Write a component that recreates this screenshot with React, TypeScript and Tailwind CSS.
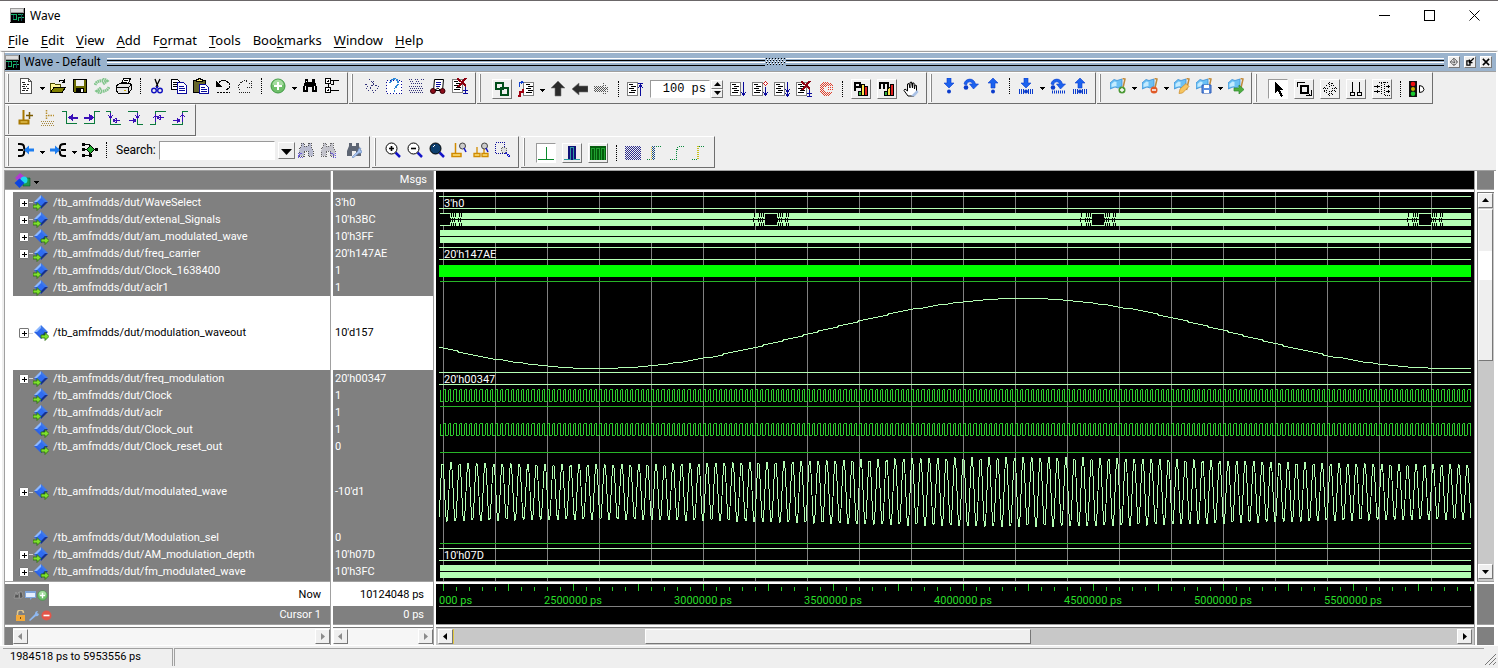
import type { ReactNode } from 'react'
import { clsx } from 'clsx'

type Kind = 'bus' | 'dense' | 'burst' | 'solid' | 'high' | 'low' | 'clock' | 'sine' | 'am'

type Signal = {
  name: string
  value: string
  kind: Kind
  dir: 'in' | 'out'
  expand?: boolean
  tall?: boolean
  selected?: boolean
}

const signals: Signal[] = [
  { name: 'WaveSelect', value: "3'h0", kind: 'bus', dir: 'in', expand: true },
  { name: 'extenal_Signals', value: "10'h3BC", kind: 'burst', dir: 'in', expand: true },
  { name: 'am_modulated_wave', value: "10'h3FF", kind: 'dense', dir: 'out', expand: true },
  { name: 'freq_carrier', value: "20'h147AE", kind: 'bus', dir: 'in', expand: true },
  { name: 'Clock_1638400', value: '1', kind: 'solid', dir: 'in' },
  { name: 'aclr1', value: '1', kind: 'high', dir: 'in' },
  { name: 'modulation_waveout', value: "10'd157", kind: 'sine', dir: 'out', expand: true, tall: true, selected: true },
  { name: 'freq_modulation', value: "20'h00347", kind: 'bus', dir: 'in', expand: true },
  { name: 'Clock', value: '1', kind: 'clock', dir: 'in' },
  { name: 'aclr', value: '1', kind: 'high', dir: 'in' },
  { name: 'Clock_out', value: '1', kind: 'clock', dir: 'out' },
  { name: 'Clock_reset_out', value: '0', kind: 'low', dir: 'out' },
  { name: 'modulated_wave', value: "-10'd1", kind: 'am', dir: 'out', expand: true, tall: true },
  { name: 'Modulation_sel', value: '0', kind: 'low', dir: 'in' },
  { name: 'AM_modulation_depth', value: "10'h07D", kind: 'bus', dir: 'in', expand: true },
  { name: 'fm_modulated_wave', value: "10'h3FC", kind: 'dense', dir: 'out', expand: true },
]

const menus: [string, string, string][] = [
  ['', 'F', 'ile'],
  ['', 'E', 'dit'],
  ['', 'V', 'iew'],
  ['', 'A', 'dd'],
  ['F', 'o', 'rmat'],
  ['', 'T', 'ools'],
  ['Boo', 'k', 'marks'],
  ['', 'W', 'indow'],
  ['', 'H', 'elp'],
]

/* ---------- icons ---------- */

const NAVY = '#0a0a9c'

function Lines({ x = 3, y = 3, c = '#000' }: { x?: number; y?: number; c?: string }) {
  return (
    <path
      d={`M${x} ${y + 0.5}h4M${x + 2} ${y + 2.5}h5M${x} ${y + 4.5}h5M${x + 2} ${y + 6.5}h5M${x} ${y + 8.5}h6`}
      stroke={c}
      fill="none"
    />
  )
}

function Sheet() {
  return (
    <>
      <path d="M.5 1.500h10v13h-10z" fill="#fff" stroke="#808080" />
      <Lines x={2} y={3} />
    </>
  )
}

function Flag() {
  return (
    <>
      <path d="M0 5l4-3.500 3 1L12 1v7l-4 2-3-1-5 2z" fill="#6bc0f4" stroke="#3a8fd6" strokeWidth=".8" />
      <path d="M1.500 6l3-2.500 2 .5v4l-5 1z" fill="#c4ebff" />
      <path d="M12.500 .5l2.500 .5-2.500 11" fill="none" stroke="#c08a3a" strokeWidth="1.500" />
    </>
  )
}

function Magnifier({ fill }: { fill: string }) {
  return (
    <>
      <path d="M10.500 10.500l4.500 4.500" stroke="#1414c8" strokeWidth="2.500" />
      <circle cx="6.500" cy="6.500" r="5.500" fill={fill} stroke="#000" />
    </>
  )
}

function StepDown() {
  return <path d="M6 0h4v5h3l-5 5-5-5h3z" fill="#1c62ee" stroke="#0b3ccc" strokeWidth=".6" />
}

function StepUp() {
  return <path d="M6 10h4v-5h3l-5-5-5 5h3z" fill="#1c62ee" stroke="#0b3ccc" strokeWidth=".6" />
}

function StepOver() {
  return (
    <>
      <path d="M1 6c1-6 10-7 11.500 0h3l-5 5-4-5h3c-1-3-5-3-6 1z" fill="#1c62ee" stroke="#0b3ccc" strokeWidth=".6" />
      <circle cx="3" cy="9.500" r="2.300" fill="#0b3ccc" />
    </>
  )
}

const Bars = () => <path d="M1.500 11v5M3.500 11v5M5.500 11v5M10.500 11v5M12.500 11v5M14.500 11v5" stroke="#0b3ccc" />

const BINO = 'M3 1h3v3h4V1h3v3l2 5v5h-5V9H6v5H1V9l2-5z'

const icons: Record<string, ReactNode> = {
  doc: (
    <>
      <path d="M2.500 .5h8l3 3v12h-11z" fill="#fff" stroke="#555" />
      <path d="M10.500 .5v3h3" fill="none" stroke="#555" />
      <path d="M4 4.500h4M5 6.500h6M4 8.500h5M5 10.500h6M4 12.500h6" stroke="#222" strokeDasharray="3 1" />
    </>
  ),
  open: (
    <>
      <path d="M.5 14V5.500h4l1 1h5V9" fill="#fff79a" stroke="#4a4a00" />
      <path d="M.5 14.500L4 9.500h11.500l-3.500 5z" fill="#808000" stroke="#000" />
      <path d="M9 3.500q2-3 5 0M14.500 1v3h-3" fill="none" stroke="#000" />
    </>
  ),
  save: (
    <>
      <path d="M1.500 1.500h13v13H2.500l-1-1z" fill="#6b6b00" stroke="#000" />
      <path d="M4 2h8v6H4z" fill="#efefef" />
      <path d="M4 10h8v5H4z" fill="#000" />
      <path d="M9 11h2v3H9z" fill="#fff" />
    </>
  ),
  reload: (
    <g fill="none" stroke="#7fc48a" strokeWidth="3" strokeDasharray="1.500 .6">
      <path d="M1 7q2-5 9-4M9 0l4 3-4 3" />
      <path d="M15 9q-2 5-9 4M7 16l-4-3 4-3" />
    </g>
  ),
  print: (
    <>
      <path d="M5.500 6l2-5.500h7L12 6" fill="#fff" stroke="#000" />
      <path d="M.5 8l3-2.500h11l1 2v4l-3 3.500H2L.5 13z" fill="#e6e6e6" stroke="#000" />
      <path d="M1 9.500h11l3-2M12 10v5M8 2.500h4M7 4.500h4" fill="none" stroke="#000" />
      <path d="M8 12h2v1H8z" fill="#c9a800" />
    </>
  ),
  cut: (
    <>
      <path d="M6 1l3 8M11 1L7 9" stroke="#000" strokeWidth="1.300" />
      <circle cx="5" cy="12.500" r="2.300" fill="none" stroke="#1010c0" strokeWidth="1.400" />
      <circle cx="11" cy="12.500" r="2.300" fill="none" stroke="#1010c0" strokeWidth="1.400" />
      <path d="M8.500 8l-2 3M7.500 8l2 3" stroke="#1010c0" />
    </>
  ),
  copy: (
    <>
      <path d="M.5 1.500h6l2 2v8h-8z" fill="#fff" stroke="#000" />
      <path d="M2 4.500h4M2 6.500h5M2 8.500h5" stroke="#000" />
      <path d="M6.500 4.500h6l3 3v8h-9z" fill="#fff" stroke={NAVY} />
      <path d="M8 8.500h5M8 10.500h6M8 12.500h6" stroke={NAVY} />
    </>
  ),
  paste: (
    <>
      <path d="M.5 2.500h12v12H.5z" fill="#66662a" stroke="#000" />
      <path d="M3.500 3.500h6v-2h-2v-1h-2v1h-2z" fill="#ffe97a" stroke="#000" />
      <path d="M6.500 6.500h6l3 3v6h-9z" fill="#fff" stroke={NAVY} />
      <path d="M8 9.500h4M8 11.500h6M8 13.500h6" stroke={NAVY} />
    </>
  ),
  undo: (
    <>
      <path d="M3 6q4-6 9-2.500t2 6.500l-3 2" fill="none" stroke="#000" />
      <path d="M1 3v6h6z" fill="#000" />
      <path d="M2 14.500h13" stroke="#000" strokeDasharray="2 1" />
    </>
  ),
  redo: (
    <g fill="none" stroke="#222" strokeDasharray="1 1">
      <path d="M13 6Q8 0 4 4.500t-1 7" />
      <path d="M14.500 3v6h-6M2 14.500h12" />
    </g>
  ),
  add: (
    <>
      <circle cx="8" cy="8" r="7" fill="#6fbf6a" stroke="#3f9a43" />
      <path d="M2.500 7a5.500 5.500 0 0 1 11 0z" fill="#a5dca0" />
      <path d="M8 4v8M4 8h8" stroke="#fff" strokeWidth="2" />
    </>
  ),
  find: (
    <>
      <path d={BINO} fill="#000" />
      <path d="M3.500 8v4M12.500 8v4M4.500 3v1" stroke="#fff" />
    </>
  ),
  tree: (
    <g fill="#fff" stroke="#000">
      <path d="M1.500 .5h5v5h-5zM1.500 9.500h5v5h-5zM3 3h2M4 2v2M3 12h2M4 11v2" />
      <path d="M4 6v3M7 2.500h8M7 6.500h2v-4M7 12.500h8" fill="none" />
    </g>
  ),
  compile: (
    <path
      d="M1 6l3 2-2 2 4 4M5 1l5 5-4 3 4 6M9 4l2-2M11 7l4 2-4 4"
      fill="none"
      stroke="#33337a"
      strokeDasharray="2 1"
    />
  ),
  compileAll: (
    <>
      <path d="M.5 2.500h15v13H.5z" fill="#fff" stroke={NAVY} strokeDasharray="1 2" />
      <path d="M4 5q1-4 4.500-4T12 5t-4 5M7.500 13h1" fill="none" stroke="#2d86d8" strokeWidth="1.800" strokeDasharray="2 .7" />
    </>
  ),
  simulate: (
    <path
      d="M1 1.500h3M7 1.500h3M13 1.500h3M2 3.500h4M8 3.500h4M3 5.500h12M1 8.500h14M2 10.500h14M1 12.500h14M2 14.500h14"
      stroke="#33337a"
      strokeDasharray="1 1"
    />
  ),
  restartDoc: (
    <>
      <path d="M4.500 1.500h9l-1 11h-9z" fill="#fff" stroke="#000" />
      <path d="M6 4.500h5M6 6.500h5M6 8.500h4" stroke={NAVY} />
      <circle cx="3" cy="13" r="2.500" fill="#8d0d1a" stroke="#3a0008" />
      <circle cx="12.500" cy="13" r="2.500" fill="#8d0d1a" stroke="#3a0008" />
      <path d="M5 12l3-2 2 2" fill="none" stroke="#000" />
    </>
  ),
  breakDoc: (
    <>
      <Sheet />
      <path d="M5 0l9 8M14 0L6 9" stroke="#8d0010" strokeWidth="2" />
      <path d="M13.500 9v6M11 12.500h5M11 15.500h5" stroke={NAVY} />
    </>
  ),
  link: (
    <g fill="none" stroke="#004d1a" strokeWidth="2">
      <path d="M2 2h7v6H2z" />
      <path d="M7 7h7v7H7z" />
    </g>
  ),
  restart: (
    <>
      <path d="M5.500 1.500h10v13h-10z" fill="#fff" stroke="#808080" />
      <Lines x={8} y={3} />
      <path d="M1.500 6V1.500h3M3 0l2 1.500-2 1.500" fill="none" stroke="#1040d0" />
      <path d="M0 15h2v-4h3v-3" fill="none" stroke="#a00010" strokeWidth="2" />
    </>
  ),
  up: <path d="M8 0l7 7h-4v8H5V7H1z" fill="#2c2c2c" stroke="#777" strokeWidth=".6" />,
  left: <path d="M0 8l7-6v3h9v6H7v3z" fill="#2c2c2c" stroke="#777" strokeWidth=".6" />,
  right: (
    <g stroke="#555" strokeDasharray="1 1">
      <path d="M0 5.500h9M1 6.500h10M0 7.500h14M1 8.500h14M0 9.500h12M1 10.500h9M9.500 2v12M11.500 4v9M13.500 6v5" />
    </g>
  ),
  runTop: (
    <>
      <Sheet />
      <path d="M13.500 2v13M11 2.500h5M11 7l2.500-3L16 7" fill="none" stroke={NAVY} />
    </>
  ),
  run: (
    <>
      <Sheet />
      <path d="M13.500 1v13M11 11l2.500 3 2.500-3" fill="none" stroke={NAVY} />
    </>
  ),
  runNext: (
    <>
      <Sheet />
      <path d="M13.500 6v8M11 11l2.500 3 2.500-3" fill="none" stroke={NAVY} />
      <path d="M13.500 .5l2 2-2 2-2-2z" fill="#fff" stroke="#d02020" />
    </>
  ),
  runAll: (
    <>
      <Sheet />
      <path d="M13.500 1v13M11 8l2.500 3 2.500-3M11 12l2.500 3 2.500-3" fill="none" stroke={NAVY} />
    </>
  ),
  stop: (
    <g fill="none" stroke="#e0402c" strokeDasharray="1 1">
      <path d="M5 1.500h6M4 2.500h9M3 3.500h11M2 4.500h13M3 5.500h5M2 6.500h4M10 6.500h5M3 7.500h3M2 8.500h4M10 8.500h5M3 9.500h3M2 10.500h5M3 11.500h12M4 12.500h10M5 13.500h8M6 14.500h5" />
    </g>
  ),
  profile: (
    <>
      <path d="M5.500 10.500h3v4h-3z" fill="#2fae3c" stroke="#000" />
      <path d="M8.500 3.500h3v11h-3z" fill="#ffe14a" stroke="#000" />
      <path d="M11.500 5.500h3v9h-3z" fill="#e02020" stroke="#000" />
      <path d="M2 10V2h5v4H2" fill="none" stroke="#000" strokeWidth="2" />
    </>
  ),
  memory: (
    <>
      <path d="M5.500 10.500h3v4h-3z" fill="#2fae3c" stroke="#000" />
      <path d="M8.500 6.500h3v8h-3z" fill="#ffe14a" stroke="#000" />
      <path d="M11.500 3.500h3v11h-3z" fill="#e02020" stroke="#000" />
      <path d="M1 8V2h8v6M5 2v6" fill="none" stroke="#000" strokeWidth="2" />
    </>
  ),
  hand: (
    <>
      <path
        d="M5 15L1 9.500l1-1.500 2.500 2V3l1.500-.5L7 7V1.500L8.500 1 9.500 7V2L11 2l.5 6L12 4l1.500.5V11L11 15z"
        fill="#fff"
        stroke="#000"
      />
      <path d="M8 15l6-6 1.500 2-4 4.500z" fill="#a9c1e6" />
    </>
  ),
  stepIn: (
    <>
      <StepDown />
      <circle cx="8" cy="13.500" r="2" fill="#0b3ccc" />
    </>
  ),
  stepOver: <StepOver />,
  stepOut: (
    <>
      <StepUp />
      <circle cx="8" cy="13.500" r="2" fill="#0b3ccc" />
    </>
  ),
  stepInAll: (
    <>
      <StepDown />
      <Bars />
      <circle cx="8" cy="13.500" r="2" fill="#0b3ccc" />
    </>
  ),
  stepOverAll: (
    <>
      <StepOver />
      <path d="M2 14h14" stroke="#0b3ccc" strokeWidth="3" strokeDasharray="1 1" />
    </>
  ),
  stepOutAll: (
    <>
      <StepUp />
      <Bars />
      <circle cx="8" cy="13.500" r="2" fill="#0b3ccc" />
    </>
  ),
  flagAdd: (
    <>
      <Flag />
      <circle cx="12" cy="12" r="3.500" fill="#4c9a36" />
      <path d="M12 10v4M10 12h4" stroke="#fff" strokeWidth="1.300" />
    </>
  ),
  flagDel: (
    <>
      <Flag />
      <circle cx="12" cy="12" r="3.500" fill="#e05a28" />
      <path d="M10 12h4" stroke="#fff" strokeWidth="1.500" />
    </>
  ),
  flagEdit: (
    <>
      <Flag />
      <path d="M5 15.500l1-4.500 6-5.500 3 3L8.500 15z" fill="#f6c560" stroke="#c98a28" strokeWidth=".7" />
    </>
  ),
  flagSave: (
    <>
      <Flag />
      <path d="M6 7h9v8H6z" fill="#5d8fe0" stroke="#2f5fb8" />
      <path d="M8 7h5v3H8zM8 12h5v3H8z" fill="#fff" />
    </>
  ),
  flagGo: (
    <>
      <Flag />
      <path d="M6 10h5V7l5 4.500L11 16v-3H6z" fill="#4fae3f" stroke="#2f8a2f" strokeWidth=".7" />
    </>
  ),
  pointer: <path d="M5 1v11l3-2 3 6 2-1-3-6h3z" fill="#000" />,
  zoomMode: (
    <>
      <path d="M1.500 6V1.500H9" fill="none" stroke="#000" />
      <path d="M5 5h7v7H5z" fill="none" stroke="#000" strokeWidth="2" />
      <path d="M10 14.500h5.500V9M11 11l4 4" fill="none" stroke="#000" />
    </>
  ),
  panMode: (
    <g fill="none" stroke="#000" strokeDasharray="1 1">
      <path d="M7.500 1v5M9.500 2v4M7.500 10v5M9.500 10v4M1 7.500h5M2 9.500h4M10 7.500h5M10 9.500h4" />
      <path d="M4.500 4.500l4-4 4 4M4.500 11.500l4 4 4-4M4.500 4.500l-4 4 4 4M11.500 4.500l4 4-4 4" />
    </g>
  ),
  twoCursor: <path d="M4.500 1v10.500M11.500 1v10.500M2.500 11.500h4v3h-4zM9.500 11.500h4v3h-4z" fill="none" stroke="#000" />,
  editMode: (
    <>
      <path d="M5 1.500h5M10.500 14.500H16M7.500 2v12M10.500 1v13M11 1.500h4" stroke="#000" fill="none" strokeDasharray="1 1" />
      <path d="M0 5.500h6M0 10.500h6M3.500 4v3M3.500 9v3M12 5.500h4M12 10.500h4M14.500 4v3M14.500 9v3" stroke="#000" />
    </>
  ),
  traffic: (
    <>
      <path d="M0 0h8v16H0z" fill="#111" />
      <circle cx="4" cy="3" r="2.300" fill="#f01010" />
      <circle cx="4" cy="8" r="2" fill="#c8b400" />
      <circle cx="4" cy="12.800" r="2.300" fill="#18c830" />
      <path d="M10.500 4.500q4 0 4.500 4-.5 3-4.500 3z" fill="#fff" stroke="#000" />
    </>
  ),
  cursorAdd: (
    <>
      <path d="M5.500 0v10M1.500 10.500h9v3h-9z" fill="#ffe27a" stroke="#a87800" strokeWidth="2" />
      <path d="M8 5.500h7M11.500 2v7" stroke="#7a5a00" strokeWidth="1.500" />
    </>
  ),
  cursorDel: (
    <>
      <path d="M6.500 0v10M8 5.500h6" stroke="#b89030" strokeWidth="1.500" strokeDasharray="1.500 1" />
      <path d="M1 11.500h13M2 13.500h12M1 15.500h13" stroke="#a88a40" strokeDasharray="1 1" />
    </>
  ),
  prevEdge: (
    <>
      <path d="M0 1.500h4.500v12H15" fill="none" stroke="#0a7a3c" />
      <path d="M6 7.500l5-4v3h5v2h-5v3z" fill="#3a10b8" />
    </>
  ),
  nextEdge: (
    <>
      <path d="M0 13.500h10.500v-12H16" fill="none" stroke="#0a7a3c" />
      <path d="M10 7.500l-5-4v3H0v2h5v3z" fill="#3a10b8" />
    </>
  ),
  prevFall: (
    <>
      <path d="M0 1.500h4.500v13H15" fill="none" stroke="#0a7a3c" />
      <path d="M4.500 3v5M2.500 5.500l2 3 2-3M7 10.500h7M10 8v5M7 10.500l3-2.500M7 10.500l3 2.500" fill="none" stroke="#3a10b8" />
    </>
  ),
  nextFall: (
    <>
      <path d="M0 1.500h9.500v13H15" fill="none" stroke="#0a7a3c" />
      <path d="M9.500 3v5M7.500 5.500l2 3 2-3M1 10.500h7M5 8v5M8 10.500L5 8M8 10.500L5 13" fill="none" stroke="#3a10b8" />
    </>
  ),
  prevRise: (
    <>
      <path d="M0 14.500h5.500v-13H16" fill="none" stroke="#0a7a3c" />
      <path d="M5.500 12V5M3.500 8l2-3 2 3M8 7.500h6M10 5v5M7 7.500L10 5M7 7.500l3 2.500" fill="none" stroke="#3a10b8" />
    </>
  ),
  nextRise: (
    <>
      <path d="M0 14.500h10.500v-13H16" fill="none" stroke="#0a7a3c" />
      <path d="M10.500 12V4M8.500 7l2-3 2 3M1 10.500h7M5 8v5M8 10.500L5 8M8 10.500L5 13" fill="none" stroke="#3a10b8" />
    </>
  ),
  drivers: (
    <>
      <path d="M0 2h2q4 0 4 3t2 3M0 8h5M0 14h2q4 0 4-3t2-3" fill="none" stroke="#000" strokeWidth="2" />
      <path d="M6 8l5-4.500v3h5v3h-5v3z" fill="#1c7df0" />
    </>
  ),
  readers: (
    <>
      <path d="M16 2h-2q-4 0-4 3t-2 3M16 8h-5M16 14h-2q-4 0-4-3t-2-3" fill="none" stroke="#000" strokeWidth="2" />
      <path d="M10 8L5 3.500v3H0v3h5v3z" fill="#1c7df0" />
    </>
  ),
  nets: (
    <>
      <path d="M1 2.500h6v11H1M0 7.500h15" fill="none" stroke="#000" />
      <path d="M0 1h3v3H0zM0 12h3v3H0zM0 6h3v3H0zM7 12h3v3H7zM13 6h3v3h-3z" fill="#000" />
      <path d="M8.500 3.500l4 4-4 4-4-4z" fill="#22b030" stroke="#000" />
    </>
  ),
  findPrev: (
    <>
      <path d={BINO} fill="#b9bcd0" stroke="#555" strokeDasharray="1 1" />
      <path d="M0 15l5-6M.5 11v4.500h4" fill="none" stroke="#6a5ad8" strokeDasharray="1 1" />
    </>
  ),
  findNext: (
    <>
      <path d={BINO} fill="#c4c4cc" stroke="#666" strokeDasharray="1 1" />
      <path d="M10 10l6 5M15.500 11v4.500h-4" fill="none" stroke="#6a5ad8" strokeDasharray="1 1" />
    </>
  ),
  findOpts: (
    <>
      <path d={BINO} fill="#5d6573" />
      <path d="M6 15l6-6q0-3 3-3l-1 2 2 1q0 3-3 2l-6 5z" fill="#a9c4ee" stroke="#6c8cc0" strokeWidth=".6" />
    </>
  ),
  zoomIn: (
    <>
      <Magnifier fill="#fff" />
      <path d="M6.500 4v5M4 6.500h5" stroke="#000" strokeWidth="1.600" />
    </>
  ),
  zoomOut: (
    <>
      <Magnifier fill="#fff" />
      <path d="M4 6.500h5" stroke="#000" strokeWidth="1.600" />
    </>
  ),
  zoomFull: (
    <>
      <Magnifier fill="#0e3f6e" />
      <path d="M4 5l2-2" stroke="#fff" />
    </>
  ),
  zoomCursor: (
    <>
      <path d="M4.500 1v10M1 11.500h9v3H1z" fill="#ffe27a" stroke="#d08a00" strokeWidth="1.500" />
      <circle cx="11.500" cy="4" r="3" fill="#ccc" stroke="#444" />
      <path d="M13 6l2 4" stroke="#1414c8" strokeWidth="1.500" />
    </>
  ),
  zoomTwo: (
    <>
      <path d="M4 5v6M1 11.500h6v3H1zM11 5v6M9 11.500h6v3H9z" fill="#ffe27a" stroke="#d08a00" strokeWidth="1.300" />
      <circle cx="11.500" cy="4" r="3" fill="#ccc" stroke="#444" />
      <path d="M13 6l2 4" stroke="#1414c8" strokeWidth="1.500" />
    </>
  ),
  zoomRegion: (
    <>
      <path d="M.5 .5h9v11h-9z" fill="none" stroke={NAVY} strokeDasharray="1 1" />
      <circle cx="9" cy="8" r="3" fill="#ddd" stroke="#666" strokeDasharray="1 1" />
      <path d="M11 11l4 4" stroke="#1414c8" strokeWidth="2" strokeDasharray="1 1" />
    </>
  ),
  litCursor: <path d="M0 14.500h16M8.500 2v12" stroke="#0a8a2c" fill="none" />,
  litDark: (
    <>
      <path d="M4 1h8v14H4z" fill="#101078" />
      <path d="M0 14.500h6.500v-12h3v12H16" fill="none" stroke="#2a9aa0" />
    </>
  ),
  litGreen: (
    <>
      <path d="M0 1h16v14H0z" fill="#045c0c" />
      <path d="M1.500 15V3.500h3V15M6.500 15V3.500h3V15M11.500 15V3.500h3V15" fill="none" stroke="#1fa030" />
    </>
  ),
  gridBlue: (
    <g stroke="#2a2a8c" strokeDasharray="1 1">
      <path d="M0 1.500h16M1 2.500h15M0 3.500h16M1 4.500h15M0 5.500h16M1 6.500h15M0 7.500h16M1 8.500h15M0 9.500h16M1 10.500h15M0 11.500h16M1 12.500h15M0 13.500h16M1 14.500h15" />
    </g>
  ),
  edgeA: (
    <>
      <path d="M0 14.500h4M9 1.500h6" stroke="#0a8a3c" strokeDasharray="1 1" />
      <path d="M5.500 1v14M6.500 2v14M7.500 1v14" stroke="#1a4a80" strokeDasharray="1 1" />
      <path d="M4.500 2v14" stroke="#c8b840" strokeDasharray="1 1" />
    </>
  ),
  edgeB: <path d="M1 14.500h6.500v-9l2-4H15" fill="none" stroke="#0a8a3c" strokeDasharray="1 1" />,
  edgeC: (
    <>
      <path d="M1 14.500h6M8 1.500h6" stroke="#0a8a3c" strokeDasharray="1 1" />
      <path d="M7 1v14" stroke="#c8c020" strokeWidth="2" strokeDasharray="1 1" />
    </>
  ),
  undock: (
    <path
      d="M8 2v12M2 8h12M5 5l3-3 3 3M5 11l3 3 3-3M5 5L2 8l3 3M11 5l3 3-3 3"
      fill="none"
      stroke="#000"
      strokeWidth="1.200"
      strokeDasharray="2 1"
    />
  ),
  dock: <path d="M3 6h5v7H3zM14 2L8 8M7 4v5h5" fill="none" stroke="#000" strokeWidth="2" />,
  close: <path d="M3 3l10 10M13 3L3 13" stroke="#000" strokeWidth="2.500" />,
}

// drawings with gradients or round shapes that look wrong without antialiasing
const smooth =
  /^(add|reload|up|left|step|flag|hand|cut|traffic|undock|dock|close|zoomIn|zoomOut|zoomFull|zoomCursor|zoomTwo|drivers|readers|restartDoc|findOpts|cursor)/

function Icon({ name, className = 'size-4' }: { name: string; className?: string }) {
  return (
    <svg
      viewBox="0 0 16 16"
      className={clsx('shrink-0', className)}
      shapeRendering={smooth.test(name) ? 'auto' : 'crispEdges'}
      aria-hidden="true"
    >
      {icons[name]}
    </svg>
  )
}

function AppIcon() {
  return (
    <svg viewBox="0 0 15 15" className="size-[15px] shrink-0" shapeRendering="crispEdges" aria-hidden="true">
      <path d="M0 0h15v15H0z" fill="#000" />
      <path d="M0 0h14v14H0z" fill="#9a9a9a" />
      <path d="M1 1h12v3H1z" fill="#dcdcdc" />
      <path d="M1 5h13v9H1z" fill="#000" />
      <path d="M1 6.500h5.500v5H3M8.500 13V9.500h5M8 6.500h5" fill="none" stroke="#17b26a" />
      <path d="M3.500 7v4M11.500 6v7" stroke="#174a58" />
    </svg>
  )
}

function SignalIcon({ dir }: { dir: 'in' | 'out' }) {
  return (
    <svg viewBox="0 0 16 16" className="size-4 shrink-0" aria-hidden="true">
      <path d="M8 0L1 7h7z" fill="#8db8ff" />
      <path d="M8 0l7 7H8z" fill="#3f79ea" />
      <path d="M8 14L1 7h7z" fill="#2b62e6" />
      <path d="M8 14l7-7H8z" fill="#14308f" />
      <path d="M8 3l4 4-4 4-4-4z" fill="#2f6cf0" />
      {dir === 'in' ? (
        <path d="M0 10h4V7.500L8 11.500l-4 4V13H0z" fill="#7ee02c" stroke="#2a6a10" strokeWidth=".8" />
      ) : (
        <path d="M8 10h4V7.500l4 4-4 4V13H8z" fill="#7ee02c" stroke="#2a6a10" strokeWidth=".8" />
      )}
    </svg>
  )
}

/* ---------- toolbar pieces ---------- */

function Bar({ children, boxed, label }: { children: ReactNode; boxed?: boolean; label: string }) {
  return (
    <div
      role="toolbar"
      aria-label={label}
      className="flex h-8 shrink-0 border-r border-b border-t border-t-white border-r-[#6e6e6e] border-b-[#6e6e6e] pr-1"
    >
      <div className="my-px ml-[2px] w-[2px] border-r border-l border-l-white border-r-[#8a8a8a]" />
      <div className={clsx('flex items-center', boxed ? 'pt-px pl-2' : 'pb-1 pl-[6px]')}>{children}</div>
    </div>
  )
}

function Tool({ name }: { name: string }) {
  return (
    <button aria-label={name} className="flex h-[22px] w-[22px] items-center justify-center">
      <Icon name={name} />
    </button>
  )
}

function BoxTool({ name, down }: { name: string; down?: boolean }) {
  return (
    <button
      aria-label={name}
      className={clsx(
        'mx-[3px] flex size-5 items-center justify-center border',
        down ? 'border-[#9a9a9a] border-r-white border-b-white bg-white' : 'border-white border-r-[#777] border-b-[#777]',
      )}
    >
      <Icon name={name} />
    </button>
  )
}

function Drop() {
  return (
    <button aria-label="More" className="flex h-[22px] w-[10px] items-center justify-center">
      <svg viewBox="0 0 5 3" className="mt-1 h-[3px] w-[5px]" shapeRendering="crispEdges">
        <path d="M0 0h5L2.500 3z" />
      </svg>
    </button>
  )
}

function Sep() {
  return (
    <div className="flex w-[11px] justify-center">
      <div className="h-4 border-l border-dotted border-black" />
    </div>
  )
}

function Tools({ names }: { names: string }) {
  return (
    <>
      {names.split(' ').map((n, i) => (n === '|' ? <Sep key={i} /> : n === 'v' ? <Drop key={i} /> : <Tool key={i} name={n} />))}
    </>
  )
}

function ScrollButton({ dir, disabled }: { dir: 'up' | 'down' | 'left' | 'right'; disabled?: boolean }) {
  const d = { up: 'M1 6l3.500-4L8 6z', down: 'M1 3l3.500 4L8 3z', left: 'M6 1v7L2 4.500z', right: 'M3 1v7l4-3.500z' }[dir]
  return (
    <button
      aria-label={'Scroll ' + dir}
      className="flex size-[15px] shrink-0 items-center justify-center border border-white border-r-[#777] border-b-[#777] bg-[#efefef]"
    >
      <svg viewBox="0 0 9 9" className={clsx('size-[9px]', disabled ? 'fill-[#8a8a8a]' : 'fill-black')}>
        <path d={d} />
      </svg>
    </button>
  )
}

/* ---------- waveforms ---------- */

// everything is drawn this wide and clipped by the window
const SPAN = 3000
const GRID = 52
const ENV_PERIOD = 851
const ENV_START = 157

const range = (n: number) => Array.from({ length: n }, (_, i) => i)

const envelope = (x: number) => (1 - Math.cos(((x - ENV_START) / ENV_PERIOD) * 2 * Math.PI)) / 2

function clockPath(top: number) {
  return range(Math.floor(SPAN / 5.2))
    .map(i => {
      const x = Math.round(i * 5.2) + 1.5
      const next = Math.round((i + 1) * 5.2) + 1.5
      return `M${x} ${top + 3}v11.500H${x + 2.5}M${x + 2.5} ${top + 14}V${top + 3}M${x + 3} ${top + 2.5}H${next}`
    })
    .join('')
}

function sinePath(top: number) {
  let d = ''
  for (let x = 0; x < SPAN; x += 5) {
    const y = Math.round(top + 72 - 70 * envelope(x)) + 0.5
    d += (x ? `L${x} ${y}` : `M0 ${y}`) + `h3`
  }
  return d
}

function amPath(top: number) {
  let d = ''
  for (let x = 0; x < SPAN; x++) {
    const amp = 28 + 7 * envelope(x)
    const y = top + 37 - amp * Math.cos(((x - 3.5) / 8.54) * 2 * Math.PI)
    d += `${x ? 'L' : 'M'}${x} ${y.toFixed(1)}`
  }
  return d
}

function Burst({ x, top }: { x: number; top: number }) {
  return (
    <g>
      <path d={`M${x - 6} ${top + 3}h12v11h-12z`} fill="#000" />
      <path
        d={[-17, -12, -10, -8, 7, 9, 11, 15, 17].map(o => `M${x + o + 0.5} ${top + 2}v4m-1 1v4m1 1v3`).join('')}
        stroke="#000"
      />
    </g>
  )
}

function Trace({ s, top }: { s: Signal; top: number }) {
  switch (s.kind) {
    case 'bus':
      return (
        <>
          <path d={`M0 ${top + 2.5}H${SPAN}M0 ${top + 14.5}H${SPAN}`} stroke="#b4ffb4" />
          <text x="5" y={top + 13} fill="#fff">
            {s.value}
          </text>
        </>
      )
    case 'dense':
    case 'burst':
      return (
        <>
          <path d={`M1 ${top + 2}H${SPAN}v13H1z`} fill="#b4ffb4" />
          <path d={`M0 ${top + 8.5}H${SPAN}`} stroke="#000" />
          {s.kind === 'burst' && (
            <>
              <path d={`M0 ${top + 3}h10v11H0z`} fill="#000" />
              {range(9).map(i => (
                <Burst key={i} x={5 + i * 327} top={top} />
              ))}
            </>
          )}
        </>
      )
    case 'solid':
      return <path d={`M0 ${top + 3}H${SPAN}v12H0z`} fill="#00ff00" />
    case 'high':
      return <path d={`M1 ${top + 2.5}H${SPAN}`} stroke="#28b428" />
    case 'low':
      return <path d={`M1 ${top + 14.5}H${SPAN}`} stroke="#28b428" />
    case 'clock':
      return <path d={clockPath(top)} stroke="#2cc82c" fill="none" />
    case 'sine':
      return <path d={sinePath(top)} stroke="#b4ffb4" fill="none" />
    case 'am':
      return <path d={amPath(top)} stroke="#b4ffb4" fill="none" />
  }
}

function WaveCanvas() {
  let y = 2
  const placed = signals.map(s => {
    const top = y
    y += s.tall ? 74 : 17
    return { s, top }
  })
  return (
    <svg className="block h-[389px] w-full text-[11px]" shapeRendering="crispEdges" aria-label="Waveforms">
      <path d={range(58).map(i => `M${4.5 + i * GRID} 0v389`).join('')} stroke="#808080" />
      {placed.map(({ s, top }) => (
        <Trace key={s.name} s={s} top={top} />
      ))}
    </svg>
  )
}

function Ruler() {
  const ticks = range(230).map(i => `M${4.5 + i * 13} ${i % 5 ? 3 : 0}V7`).join('')
  return (
    <svg className="block h-10 w-full text-[11px]" shapeRendering="crispEdges" aria-label="Time">
      <path d={ticks} stroke="#28c828" />
      <path d={`M0 22.500H${SPAN}`} stroke="#808080" />
      <g fill="#28dc28">
        <text x="0" y="20">
          000 ps
        </text>
        {range(7).map(i => (
          <text key={i} x={134 + i * 130} y="20" textAnchor="middle">
            {2500000 + i * 500000} ps
          </text>
        ))}
      </g>
    </svg>
  )
}

/* ---------- panes ---------- */

const column = 'flex flex-col border-r border-[#a0a0a0]'
const rule = 'h-[3px] shrink-0 border-t border-[#a0a0a0] bg-white'

function NamePane() {
  return (
    <div className={clsx(column, 'w-[326px] shrink-0')}>
      <div className="flex h-[18px] items-center bg-[#808080] pl-[9px]">
        <button aria-label="Signal filter" className="flex items-center">
          <svg viewBox="0 0 17 15" className="h-[15px] w-[17px]">
            <path d="M6 0l5 4-6 5-4-4z" fill="#b03ad0" />
            <path d="M9 5h7v8H9z" fill="#1f9a50" stroke="#0a5a2a" strokeWidth=".6" />
            <circle cx="10" cy="7" r="3.500" fill="#20d8f0" />
            <path d="M5.500 5.500l5 4.500-5 5-5-5z" fill="#0b45e0" />
          </svg>
        </button>
        <Drop />
      </div>
      <div className={rule} />
      <div className="bg-white pl-2">
        <ul className="bg-[#808080] pt-[2px] pb-px text-white">
          {signals.map(s => (
            <li
              key={s.name}
              className={clsx('flex items-center pl-[6px]', s.tall ? 'h-[74px]' : 'h-[17px]', s.selected && 'bg-white text-black')}
            >
              <span className="flex w-[14px] items-center">
                {s.expand && (
                  <>
                    <button aria-label={'Expand ' + s.name} className="size-[10px] shrink-0 rounded-[1px] border border-[#777] bg-white">
                      <svg viewBox="0 0 8 8" className="size-2" shapeRendering="crispEdges">
                        <path d="M2 4.500h5M4.500 2v5" stroke="#000" />
                      </svg>
                    </button>
                    <span className="h-px w-1 bg-[#d4d4d4]" />
                  </>
                )}
              </span>
              <SignalIcon dir={s.dir} />
              <span className="pl-1 whitespace-nowrap">/tb_amfmdds/dut/{s.name}</span>
            </li>
          ))}
        </ul>
      </div>
      <div className={rule} />
      <div className="flex h-[22px] bg-white">
        <div className="flex w-11 items-center gap-px bg-[#808080] pl-2">
          <svg viewBox="0 0 11 11" className="size-[11px]">
            <path d="M1 8l2-6 1 3 2-3v6zM6 2h3l1 5-3 2z" fill="#565656" stroke="#aaa" strokeWidth=".6" />
          </svg>
          <svg viewBox="0 0 11 11" className="size-[11px]">
            <path d="M0 1h11v7H7l-2 2V8H0z" fill="#7fa6dc" />
            <path d="M1 3h9v4H1z" fill="#e4efff" />
          </svg>
          <Icon name="add" className="size-[11px]" />
        </div>
        <div className="flex flex-1 items-center justify-end pr-[9px]">Now</div>
      </div>
      <div className="flex h-[18px] items-center bg-[#808080] pr-[9px] pl-[10px] text-white">
        <div className="flex gap-[2px]">
          <svg viewBox="0 0 11 11" className="size-[11px]">
            <path d="M2.500 6V3a3 3 0 0 1 6 0" fill="none" stroke="#e0c890" strokeWidth="1.500" />
            <path d="M1 5h9v6H1z" fill="#f2a93a" />
            <path d="M5 7h1v2H5z" fill="#7a4a00" />
          </svg>
          <svg viewBox="0 0 11 11" className="size-[11px]">
            <path d="M1 10l6-6q0-3 3-3L9 3l2 1q-1 3-3 2l-6 5z" fill="#8fb8f0" />
          </svg>
          <svg viewBox="0 0 11 11" className="size-[11px]">
            <circle cx="5.500" cy="5.500" r="5" fill="#e2564a" />
            <path d="M2.500 5.500h6" stroke="#fff" strokeWidth="1.600" />
          </svg>
        </div>
        <span className="flex-1 text-right">Cursor 1</span>
      </div>
      <div className={rule} />
      <div className="flex h-[18px] bg-[#808080] pl-2">
        <div className="flex flex-1 items-center border-t border-[#777] bg-[#f6f6f6]">
          <ScrollButton dir="left" disabled />
          <div className="flex-1" />
          <ScrollButton dir="right" disabled />
        </div>
      </div>
    </div>
  )
}

function ValuePane() {
  return (
    <div className={clsx(column, 'w-[101px] shrink-0')}>
      <div className="flex h-[18px] items-center justify-end bg-[#808080] pr-[6px] text-white">Msgs</div>
      <div className={rule} />
      <ul className="bg-[#808080] pt-[2px] pb-px text-white">
        {signals.map(s => (
          <li
            key={s.name}
            className={clsx('flex items-center pl-[2px]', s.tall ? 'h-[74px]' : 'h-[17px]', s.selected && 'bg-white text-black')}
          >
            {s.value}
          </li>
        ))}
      </ul>
      <div className={rule} />
      <div className="flex h-[22px] items-center justify-end bg-white pr-[9px]">10124048 ps</div>
      <div className="flex h-[18px] items-center justify-end bg-[#808080] pr-[9px] text-white">0 ps</div>
      <div className={rule} />
      <div className="flex h-[18px] items-center border-t border-[#777] bg-[#f6f6f6]">
        <ScrollButton dir="left" disabled />
        <div className="flex-1" />
        <ScrollButton dir="right" disabled />
      </div>
    </div>
  )
}

function WavePane() {
  return (
    <div className={clsx(column, 'min-w-0 flex-1')}>
      <div className="h-[18px] bg-black" />
      <div className={rule} />
      <div className="bg-black px-[3px]">
        <WaveCanvas />
      </div>
      <div className={rule} />
      <div className="bg-black px-[3px]">
        <Ruler />
      </div>
      <div className={rule} />
      <div className="flex h-[18px] items-center border-t border-[#777] bg-[#c8c8c8] px-[2px]">
        <ScrollButton dir="left" />
        <div className="h-[15px] w-px bg-[#e0c840]" />
        <div className="flex-1">
          <div className="ml-[19%] h-[15px] w-[38.500%] border border-white border-r-[#777] border-b-[#777] bg-[#efefef]" />
        </div>
        <ScrollButton dir="right" />
      </div>
    </div>
  )
}

function ScrollPane() {
  return (
    <div className="flex w-[17px] shrink-0 flex-col">
      <div className="h-[18px] bg-[#808080]" />
      <div className={rule} />
      <div className="flex h-[389px] flex-col border-t border-l border-[#777] bg-[#c8c8c8] pb-[2px]">
        <ScrollButton dir="up" />
        <div className="mt-px flex h-[152px] w-[15px] flex-col justify-center border border-white border-r-[#777] border-b-[#777] bg-[#efefef]">
          <div className="mb-10 h-[29px] bg-white" />
        </div>
        <div className="flex-1" />
        <ScrollButton dir="down" />
      </div>
      <div className={rule} />
      <div className="h-10 bg-[#808080]" />
      <div className={rule} />
      <div className="h-[18px] bg-[#808080]" />
    </div>
  )
}

export default function App() {
  return (
    <div className="border-t border-[#6b6769] bg-[#efefef] font-[Roboto,'Liberation_Sans',sans-serif] text-[11px] leading-4 text-black">
      {/* Title bar */}
      <header className="flex h-[29px] items-center bg-white pr-[18px] pl-[10px]">
        <AppIcon />
        <h1 className="flex-1 pl-[5px] font-['Noto_Sans',sans-serif] text-xs">Wave</h1>
        <div className="flex items-center gap-[34px]">
          <button aria-label="Minimize" className="flex h-3 w-[11px] items-center">
            <span className="h-px w-full bg-black" />
          </button>
          <button aria-label="Maximize" className="size-[11px] border border-black" />
          <button aria-label="Close" className="size-[11px]">
            <svg viewBox="0 0 11 11" className="size-[11px]">
              <path d="M.5 .5l10 10M10.500 .5l-10 10" stroke="#000" />
            </svg>
          </button>
        </div>
      </header>

      {/* Menu */}
      <nav className="flex h-5 items-center gap-3 bg-white pl-2 font-['Noto_Sans',sans-serif] text-[13px]">
        {menus.map(([a, key, b]) => (
          <button key={a + key + b}>
            {a}
            <span className="underline underline-offset-2">{key}</span>
            {b}
          </button>
        ))}
      </nav>

      <main className="mt-px border-t border-r-2 border-l-2 border-[#a0a0a0] border-r-white border-l-white pl-[2px]">
        {/* Pane caption */}
        <div className="flex h-5 items-center border-t border-b border-l border-white border-b-[#a0a0a0] border-l-[#a0a0a0] bg-[#9ab3cd] pr-1">
          <AppIcon />
          <h2 className="pr-[6px] pl-1 text-xs">Wave - Default</h2>
          <Grip />
          <svg viewBox="0 0 19 8" className="mx-px h-2 w-[19px] shrink-0" shapeRendering="crispEdges">
            <path d="M0 .5h19M1 2.500h18M0 4.500h19M1 6.500h18" stroke="#000" strokeDasharray="1 2" />
            <path d="M1 1.500h18M0 3.500h19M1 5.500h18" stroke="#fff" strokeDasharray="1 2" />
          </svg>
          <Grip />
          <div className="flex gap-1 pl-1">
            {['undock', 'dock', 'close'].map(n => (
              <button
                key={n}
                aria-label={n}
                className="flex size-3 items-center justify-center border border-white border-r-[#777] border-b-[#777] bg-[#efefef]"
              >
                <Icon name={n} className="size-[10px]" />
              </button>
            ))}
          </div>
        </div>

        {/* Toolbars */}
        <div className="flex gap-px border-l border-[#a0a0a0]">
          <Bar label="Standard">
            <Tools names="doc v open save reload print | cut copy paste undo redo | add v find tree" />
          </Bar>
          <Bar label="Compile">
            <span className="flex pl-[2px]">
              <Tools names="compile compileAll simulate restartDoc breakDoc" />
            </span>
          </Bar>
          <Bar label="Simulate" boxed>
            <BoxTool name="link" />
            <Tools names="restart v up left right | runTop" />
            <input
              aria-label="Run length"
              defaultValue="100 ps"
              className="ml-1 h-[18px] w-[60px] border border-[#999] border-r-white border-b-white bg-white pr-[3px] text-right font-['Liberation_Mono',monospace] text-xs"
            />
            <div className="mr-1 ml-px flex flex-col">
              <button aria-label="Increase" className="flex h-[9px] w-3 items-center justify-center border border-white border-r-[#777] border-b-[#777]">
                <svg viewBox="0 0 7 4" className="h-1 w-[7px]">
                  <path d="M0 4h7L3.500 0z" />
                </svg>
              </button>
              <button aria-label="Decrease" className="flex h-[9px] w-3 items-center justify-center border border-white border-r-[#777] border-b-[#777]">
                <svg viewBox="0 0 7 4" className="h-1 w-[7px]">
                  <path d="M0 0h7L3.500 4z" />
                </svg>
              </button>
            </div>
            <Tools names="run runNext runAll breakDoc stop |" />
            <BoxTool name="profile" />
            <BoxTool name="memory" />
            <Tools names="hand" />
          </Bar>
          <Bar label="Step">
            <Tools names="stepIn stepOver stepOut | stepInAll v stepOverAll stepOutAll" />
          </Bar>
          <Bar label="Bookmarks">
            <Tools names="flagAdd v flagDel v flagEdit flagSave v flagGo" />
          </Bar>
          <Bar label="Mode" boxed>
            <BoxTool name="pointer" down />
            <BoxTool name="zoomMode" />
            <BoxTool name="panMode" />
            <BoxTool name="twoCursor" />
            <BoxTool name="editMode" />
            <Tools names="| traffic" />
          </Bar>
        </div>
        <div className="flex border-l border-[#a0a0a0]">
          <Bar label="Cursors">
            <Tools names="cursorAdd cursorDel prevEdge nextEdge prevFall nextFall prevRise nextRise" />
          </Bar>
        </div>
        <div className="flex gap-[2px] border-l border-[#a0a0a0]">
          <Bar label="Search">
            <Tools names="drivers v readers v nets |" />
            <label htmlFor="search" className="w-[47px] pl-1 text-xs">
              Search:
            </label>
            <input id="search" className="h-[19px] w-[116px] border border-[#999] border-r-white border-b-white bg-white px-1" />
            <button
              aria-label="Search history"
              className="ml-[3px] flex h-[17px] w-[17px] items-end justify-center border border-white border-r-[#777] border-b-[#777] pb-[2px]"
            >
              <svg viewBox="0 0 11 7" className="h-[7px] w-[11px]">
                <path d="M0 0h11L5.500 6z" />
              </svg>
            </button>
            <span className="flex pr-1">
              <Tools names="findPrev findNext" />
            </span>
            <Tools names="findOpts" />
          </Bar>
          <Bar label="Zoom">
            <Tools names="zoomIn zoomOut zoomFull zoomCursor zoomTwo zoomRegion" />
          </Bar>
          <Bar label="Expanded time" boxed>
            <BoxTool name="litCursor" down />
            <BoxTool name="litDark" />
            <BoxTool name="litGreen" />
            <Tools names="| gridBlue edgeA edgeB edgeC" />
          </Bar>
        </div>

        {/* Signals and waves */}
        <div className="mt-[2px] flex gap-[2px] border-t border-l border-[#a0a0a0] bg-white pr-[2px]">
          <NamePane />
          <ValuePane />
          <WavePane />
          <ScrollPane />
        </div>
      </main>

      {/* Status bar */}
      <footer className="flex h-[23px] items-center border-t border-white pr-[2px] pl-[3px]">
        <div className="h-[18px] w-[170px] border-t border-r border-[#a0a0a0] pl-[7px]">1984518 ps to 5953556 ps</div>
        <div className="ml-px h-[18px] flex-1 border-t border-l border-[#a0a0a0]" />
        <svg viewBox="0 0 12 12" className="mt-1 size-3">
          <path d="M1 12L12 1M5 12l7-7M9 12l3-3" stroke="#777" />
        </svg>
      </footer>
    </div>
  )
}

function Grip() {
  return (
    <div className="flex min-w-0 flex-1 flex-col gap-px">
      <div className="h-[3px] border-t border-b border-white border-b-black bg-[#9ab3cd]" />
      <div className="h-[4px] border-t border-b border-white border-b-black bg-[#9ab3cd]" />
    </div>
  )
}
